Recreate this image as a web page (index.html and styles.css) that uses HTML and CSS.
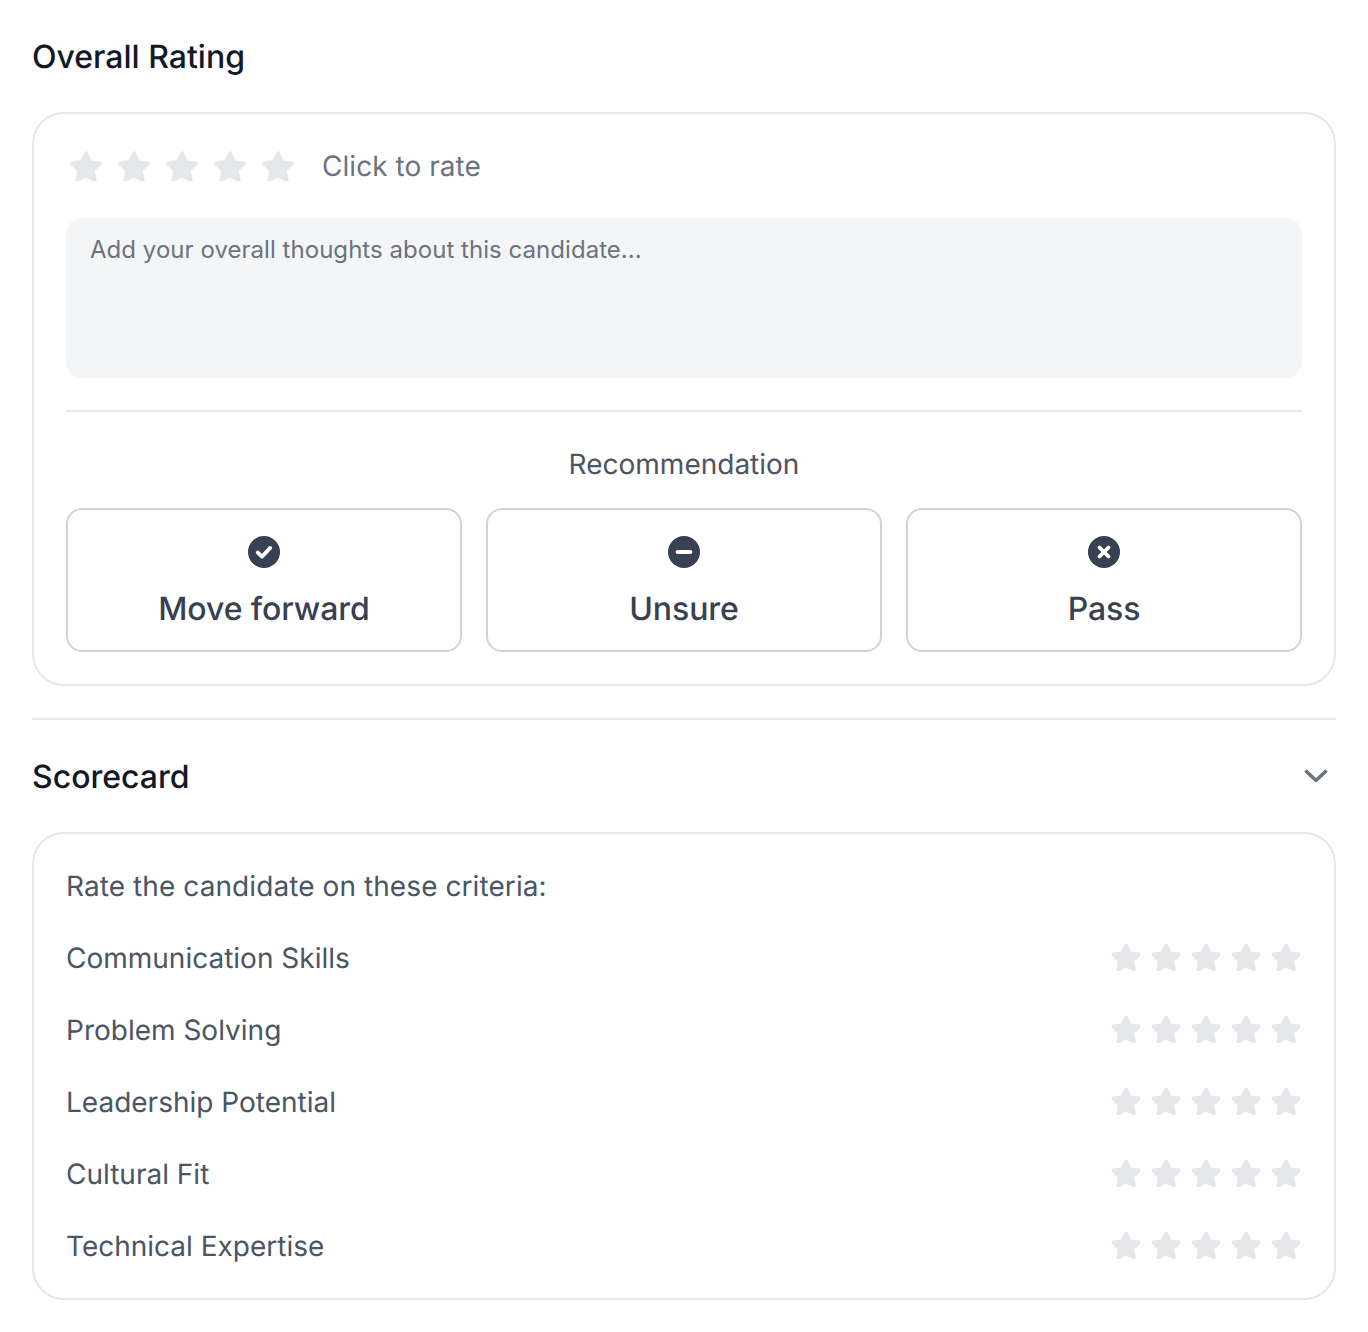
FILE: index.html
```html
<!DOCTYPE html>
<html lang="en">
<head>
    <meta charset="UTF-8">
    <meta name="viewport" content="width=device-width, initial-scale=1.0">
    <title>Candidate Feedback</title>
    <link rel="stylesheet" href="styles.css">
</head>
<body>
    <svg class="defs" width="0" height="0" aria-hidden="true">
        <symbol id="star" viewBox="0 0 32 30" overflow="visible">
            <path d="M16 .6c.7 0 1.300.4 1.600 1l3.700 8 8.800 1.100c.7.100 1.300.6 1.500 1.200.2.700 0 1.400-.5 1.800l-6.500 6 1.700 8.600c.1.700-.1 1.400-.7 1.800-.6.400-1.300.4-1.900.1L16 25.900l-7.700 4.300c-.6.300-1.300.3-1.900-.1-.6-.4-.8-1.100-.7-1.800l1.700-8.600-6.500-6c-.5-.4-.7-1.100-.5-1.800.2-.6.800-1.100 1.500-1.200l8.800-1.100 3.700-8c.3-.6.900-1 1.600-1z"/>
        </symbol>
    </svg>

    <h2 class="section-title">Overall Rating</h2>
    <section class="card">
        <div class="rating-row">
            <div class="stars stars-big">
                <svg class="star"><use href="#star"/></svg>
                <svg class="star"><use href="#star"/></svg>
                <svg class="star"><use href="#star"/></svg>
                <svg class="star"><use href="#star"/></svg>
                <svg class="star"><use href="#star"/></svg>
            </div>
            <span class="rate-hint">Click to rate</span>
        </div>
        <textarea class="notes" placeholder="Add your overall thoughts about this candidate..."></textarea>
        <div class="recommend">
            <div class="recommend-label">Recommendation</div>
            <div class="recommend-grid">
                <button class="choice">
                    <svg class="choice-icon" viewBox="0 0 32 32">
                        <circle cx="16" cy="16" r="16"/>
                        <path d="M9.800 16.600l4.200 4 8.200-8.700"/>
                    </svg>
                    <span>Move forward</span>
                </button>
                <button class="choice">
                    <svg class="choice-icon" viewBox="0 0 32 32">
                        <circle cx="16" cy="16" r="16"/>
                        <path d="M9.500 16h13"/>
                    </svg>
                    <span>Unsure</span>
                </button>
                <button class="choice">
                    <svg class="choice-icon" viewBox="0 0 32 32">
                        <circle cx="16" cy="16" r="16"/>
                        <path d="M11.500 11.500l9 9M20.500 11.500l-9 9"/>
                    </svg>
                    <span>Pass</span>
                </button>
            </div>
        </div>
    </section>

    <div class="scorecard">
        <div class="scorecard-head">
            <h2 class="section-title">Scorecard</h2>
            <svg class="chevron" viewBox="0 0 24 24"><path d="M1.500 6.500L12 16.500 22.500 6.500"/></svg>
        </div>
        <section class="card">
            <div class="criteria-intro">Rate the candidate on these criteria:</div>
            <div class="criteria-row">
                <span>Communication Skills</span>
                <div class="stars stars-small">
                    <svg class="star"><use href="#star"/></svg>
                    <svg class="star"><use href="#star"/></svg>
                    <svg class="star"><use href="#star"/></svg>
                    <svg class="star"><use href="#star"/></svg>
                    <svg class="star"><use href="#star"/></svg>
                </div>
            </div>
            <div class="criteria-row">
                <span>Problem Solving</span>
                <div class="stars stars-small">
                    <svg class="star"><use href="#star"/></svg>
                    <svg class="star"><use href="#star"/></svg>
                    <svg class="star"><use href="#star"/></svg>
                    <svg class="star"><use href="#star"/></svg>
                    <svg class="star"><use href="#star"/></svg>
                </div>
            </div>
            <div class="criteria-row">
                <span>Leadership Potential</span>
                <div class="stars stars-small">
                    <svg class="star"><use href="#star"/></svg>
                    <svg class="star"><use href="#star"/></svg>
                    <svg class="star"><use href="#star"/></svg>
                    <svg class="star"><use href="#star"/></svg>
                    <svg class="star"><use href="#star"/></svg>
                </div>
            </div>
            <div class="criteria-row">
                <span>Cultural Fit</span>
                <div class="stars stars-small">
                    <svg class="star"><use href="#star"/></svg>
                    <svg class="star"><use href="#star"/></svg>
                    <svg class="star"><use href="#star"/></svg>
                    <svg class="star"><use href="#star"/></svg>
                    <svg class="star"><use href="#star"/></svg>
                </div>
            </div>
            <div class="criteria-row">
                <span>Technical Expertise</span>
                <div class="stars stars-small">
                    <svg class="star"><use href="#star"/></svg>
                    <svg class="star"><use href="#star"/></svg>
                    <svg class="star"><use href="#star"/></svg>
                    <svg class="star"><use href="#star"/></svg>
                    <svg class="star"><use href="#star"/></svg>
                </div>
            </div>
        </section>
    </div>
</body>
</html>
```

FILE: styles.css
```css
* {
    box-sizing: border-box;
}

body {
    margin: 0;
    padding: 32px;
    background: #fff;
    font-family: 'Inter', sans-serif;
    color: #4b5563;
    text-rendering: geometricPrecision;
}

.defs {
    display: block;
    height: 0;
}

.section-title {
    margin: 0;
    padding-top: 2px;
    font-size: 32px;
    line-height: 46px;
    font-weight: 500;
    color: #111827;
}

.card {
    margin-top: 32px;
    padding: 32px;
    border: 2px solid #e5e7eb;
    border-radius: 32px;
}

.rating-row {
    display: flex;
    align-items: center;
    height: 40px;
    font-size: 28px;
}

.stars {
    display: flex;
    fill: #e5e7eb;
    stroke: #e5e7eb;
    stroke-linejoin: round;
}

.stars-big {
    gap: 16px;
    margin-left: 4px;
    stroke-width: 0.6;
}

.stars-big .star {
    width: 32px;
    height: 30px;
    overflow: visible;
}

.stars-small {
    gap: 12px;
    margin-bottom: 2px;
    stroke-width: 1.6;
}

.stars-small .star {
    width: 28px;
    height: 28px;
    overflow: visible;
}

.rate-hint {
    margin-left: 28px;
    line-height: 40px;
    color: #6b7280;
    letter-spacing: 0.05px;
}

.notes {
    display: block;
    width: 100%;
    height: 160px;
    margin-top: 32px;
    padding: 16px 24px;
    border: 0;
    border-radius: 16px;
    background: #f3f5f7;
    font-family: 'Inter', sans-serif;
    font-size: 24px;
    line-height: 32px;
    letter-spacing: 0.04px;
    resize: none;
}

.notes::placeholder {
    color: #6b7280;
    opacity: 1;
}

.recommend {
    margin-top: 32px;
    padding-top: 32px;
    border-top: 2px solid #e5e7eb;
}

.recommend-label {
    font-size: 28px;
    line-height: 40px;
    text-align: center;
}

.recommend-grid {
    display: grid;
    grid-template-columns: repeat(3, 1fr);
    gap: 24px;
    margin-top: 24px;
}

.choice {
    display: flex;
    flex-direction: column;
    align-items: center;
    gap: 16px;
    padding: 26px 16px 18px;
    border: 2px solid #d1d5db;
    border-radius: 16px;
    background: #fff;
    font-family: 'Inter', sans-serif;
    font-size: 32px;
    line-height: 48px;
    font-weight: 500;
    color: #374151;
    letter-spacing: -0.08px;
    text-rendering: geometricPrecision;
}

.choice span {
    padding-top: 2px;
    line-height: 46px;
}

.choice-icon {
    width: 32px;
    height: 32px;
    fill: #374151;
}

.choice-icon path {
    fill: none;
    stroke: #fff;
    stroke-width: 3.800;
    stroke-linecap: round;
    stroke-linejoin: round;
}

.scorecard {
    margin-top: 32px;
    padding-top: 32px;
    border-top: 2px solid #e5e7eb;
}

.scorecard-head {
    display: flex;
    align-items: center;
    justify-content: space-between;
}

.chevron {
    width: 24px;
    height: 24px;
    margin-right: 8px;
    fill: none;
    stroke: #6b7280;
    stroke-width: 3.500;
    stroke-linejoin: round;
}

.criteria-intro {
    font-size: 28px;
    line-height: 40px;
    letter-spacing: 0.08px;
}

.criteria-row {
    display: flex;
    align-items: center;
    justify-content: space-between;
    margin-top: 32px;
    font-size: 28px;
    line-height: 40px;
}

.criteria-row .stars {
    margin-right: 2px;
}
```
